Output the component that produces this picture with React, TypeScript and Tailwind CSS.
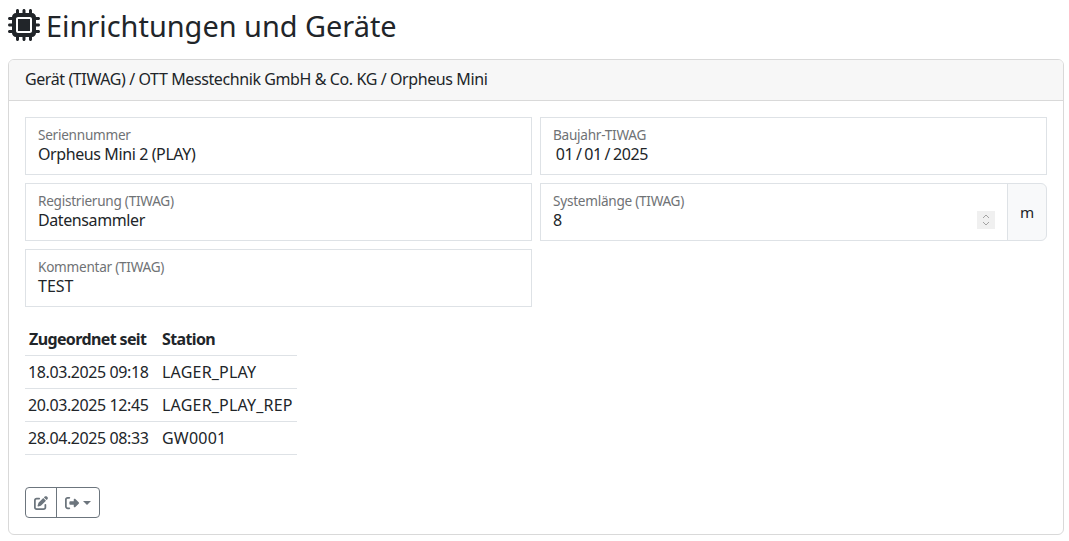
import { FaMicrochip, FaPenToSquare, FaRightFromBracket } from "react-icons/fa6";

const ROWS = [
  ["18.03.2025 09:18", "LAGER_PLAY"],
  ["20.03.2025 12:45", "LAGER_PLAY_REP"],
  ["28.04.2025 08:33", "GW0001"],
];

function Field({ label, value, className = "", valueClass = "" }: { label: string; value: string; className?: string; valueClass?: string }) {
  return (
    <div className={`h-[58px] border border-[#dee2e6] px-3 pt-[8px] ${className}`}>
      <div className="text-[13.6px] leading-[18px] tracking-[-0.26px] text-[#6f7275]">{label}</div>
      <div className={`text-[16px] leading-[20px] whitespace-pre tracking-[-0.4px] ${valueClass}`}>{value}</div>
    </div>
  );
}

function Spinner() {
  return (
    <svg width="18" height="18" viewBox="0 0 18 18" className="bg-[#f0f0f0]" fill="none" stroke="#a3a3a3" strokeWidth="1">
      <path d="M6 7l3-3 3 3M6 11l3 3 3-3" />
    </svg>
  );
}

export default function App() {
  return (
    <div className="h-[541px] overflow-hidden bg-white px-2 text-[#212529] font-['Noto_Sans',sans-serif]">
      <h1 className="h-[59px] flex items-center gap-[6px] pb-[7px] text-[28.9px] leading-[34px]">
        <FaMicrochip className="-mt-[2px] w-[32px] h-[32px] text-[#212529]" />
        Einrichtungen und Geräte
      </h1>
      <div className="w-[1056px] h-[476px] rounded-[6px] border border-[#d9d9d9]">
        <div className="h-[41px] rounded-t-[5px] border-b border-[#d9d9d9] bg-[#f7f7f7] px-4 pt-[8px] text-[16px] leading-[22px] tracking-[-0.4px]">
          Gerät (TIWAG) / OTT Messtechnik GmbH &amp; Co. KG / Orpheus Mini
        </div>
        <div className="p-4">
          <div className="grid grid-cols-2 gap-2">
            <Field label="Seriennummer" value="Orpheus Mini 2 (PLAY)" />
            <Field label="Baujahr-TIWAG" value=" 01 / 01 / 2025" valueClass="[word-spacing:-1px]" />
            <Field label="Registrierung (TIWAG)" value="Datensammler" />
            <div className="flex">
              <div className="relative flex-1">
                <Field label="Systemlänge (TIWAG)" value="8" className="rounded-l-none" />
                <div className="absolute right-[13px] top-[28px]">
                  <Spinner />
                </div>
              </div>
              <div className="-ml-px flex w-[40px] items-center justify-center rounded-r-[6px] border border-[#dee2e6] bg-[#f8f9fa] text-[15.2px]">
                m
              </div>
            </div>
            <Field label="Kommentar (TIWAG)" value="TEST" valueClass="tracking-normal" />
          </div>
          <table className="mt-4 w-[272px] border-collapse text-[16px] leading-[24px]">
            <thead>
              <tr className="border-b border-[#dee2e6] tracking-[-0.62px]">
                <th className="w-[133px] py-1 pl-1 pr-0 text-left font-bold">Zugeordnet seit</th>
                <th className="py-1 pl-1 pr-0 text-left font-bold">Station</th>
              </tr>
            </thead>
            <tbody>
              {ROWS.map(([date, station]) => (
                <tr key={date} className="border-b border-[#dee2e6]">
                  <td className="py-1 pl-[3px] pr-0 whitespace-nowrap tracking-[-0.4px]">{date}</td>
                  <td className="py-1 pl-1 pr-0 whitespace-nowrap tracking-[0.2px]">{station}</td>
                </tr>
              ))}
            </tbody>
          </table>
          <div className="mt-8 inline-flex h-[31px] rounded-[4px] border border-[#6c757d] text-[#6c757d]">
            <button className="flex w-[31px] items-center justify-center border-r border-[#6c757d]">
              <FaPenToSquare className="h-[14px] w-[14px]" />
            </button>
            <button className="flex w-[42px] items-center justify-center gap-1">
              <FaRightFromBracket className="h-[14px] w-[14px]" />
              <span className="h-0 w-0 border-x-[4.5px] border-t-[4.5px] border-x-transparent border-t-[#6c757d]" />
            </button>
          </div>
        </div>
      </div>
    </div>
  );
}
